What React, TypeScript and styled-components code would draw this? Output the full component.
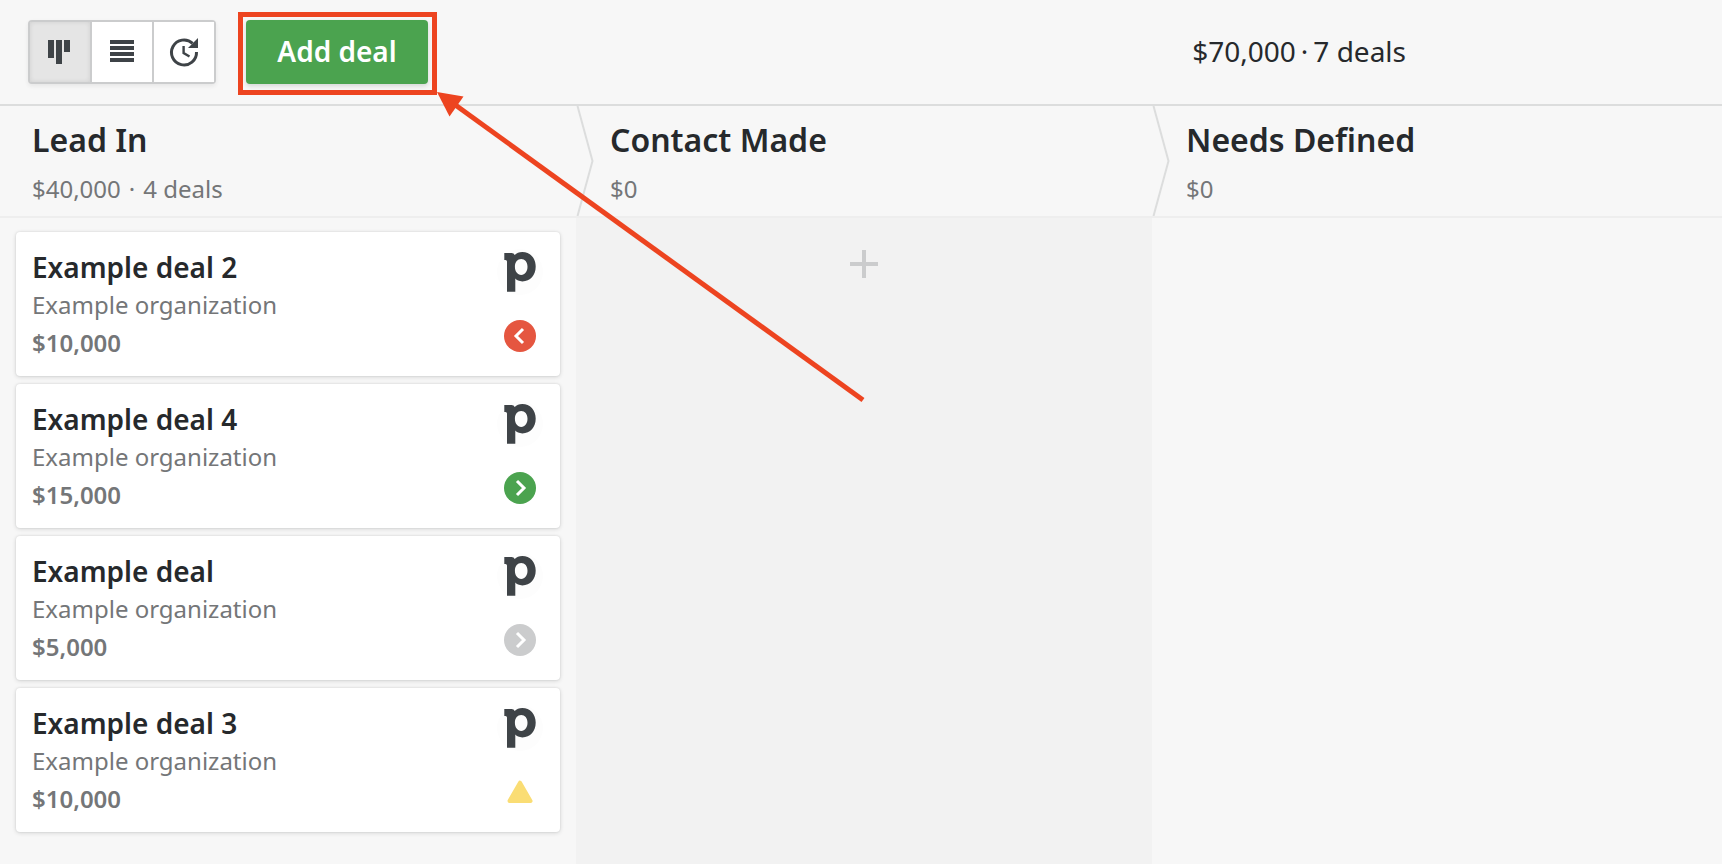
import React from "react";
import styled, { createGlobalStyle, css } from "styled-components";

const GlobalStyle = createGlobalStyle`
  * {
    box-sizing: border-box;
  }
  body {
    margin: 0;
    background: #f7f7f7;
    color: #26292c;
    font-family: "Noto Sans", "Open Sans", sans-serif;
    overflow-x: hidden;
  }
  h2, h3, p, ul {
    margin: 0;
    padding: 0;
  }
`;

const Page = styled.div`
  display: flex;
  flex-direction: column;
  min-height: 100vh;
  overflow: hidden;
`;

const Toolbar = styled.header`
  display: flex;
  align-items: center;
  padding: 20px 316px 20px 28px;
  border-bottom: 2px solid #dcdddd;
`;

const ViewSwitch = styled.div`
  display: flex;
  height: 64px;
  border: 2px solid #cbcccd;
  border-radius: 4px;
  background: #fff;
  box-shadow: 0 2px 4px rgba(38, 41, 44, 0.08);
`;

const ViewButton = styled.button<{ $active?: boolean }>`
  display: flex;
  align-items: center;
  justify-content: center;
  box-sizing: content-box;
  width: 60px;
  padding: 0;
  border: 0;
  background: #fff;
  color: #3e4347;
  cursor: pointer;

  & + & {
    border-left: 2px solid #cbcccd;
  }

  ${(p) =>
    p.$active &&
    css`
      background: #e5e5e5;
      box-shadow: inset 0 0 4px rgba(38, 41, 44, 0.12);
    `}
`;

const Highlight = styled.div`
  position: relative;
  margin-left: 30px;

  &::before {
    content: "";
    position: absolute;
    inset: -8px -9px -11px -8px;
    border: 5px solid #ed4420;
    pointer-events: none;
  }
`;

const AddButton = styled.button`
  display: block;
  width: 182px;
  height: 64px;
  padding: 0 0 2px;
  border: 0;
  border-radius: 4px;
  background: #4ba34f;
  box-shadow: 0 2px 4px rgba(38, 41, 44, 0.16);
  color: #fff;
  font: 600 28px/40px "Noto Sans", "Open Sans", sans-serif;
  cursor: pointer;
`;

const Arrow = styled.svg`
  position: absolute;
  top: 100%;
  left: 100%;
  z-index: 2;
  overflow: visible;
  pointer-events: none;
`;

const Summary = styled.p`
  display: flex;
  gap: 5px;
  margin-left: auto;
  padding-bottom: 2px;
  font-size: 28px;
  line-height: 40px;
`;

const Board = styled.main`
  display: grid;
  grid-template-columns: repeat(3, 1fr);
  flex: 1;
  margin-right: -6px;
`;

const Stage = styled.section`
  display: flex;
  flex-direction: column;
`;

const StageHeader = styled.div`
  position: relative;
  height: 112px;
  padding: 12px 32px 0;
  border-bottom: 2px solid #eeeeee;

  ${Stage} + ${Stage} & {
    padding-left: 34px;
  }
`;

const StageName = styled.h2`
  font-size: 32px;
  font-weight: 600;
  line-height: 44px;
`;

const StageTotal = styled.p`
  display: flex;
  gap: 8px;
  padding-top: 8px;
  color: #747678;
  font-size: 24px;
  line-height: 38px;
`;

const Chevron = styled.svg`
  position: absolute;
  top: 0;
  left: 0;
`;

const StageBody = styled.div<{ $hovered?: boolean }>`
  display: flex;
  flex-direction: column;
  flex: 1;
  padding: 14px 16px;
  background: ${(p) => (p.$hovered ? "#f2f2f2" : "transparent")};
`;

const Deals = styled.ul`
  display: flex;
  flex-direction: column;
  gap: 8px;
  list-style: none;
`;

const Card = styled.li`
  display: flex;
  justify-content: space-between;
  height: 144px;
  padding: 16px;
  border-radius: 4px;
  background: #fff;
  box-shadow: 0 0 2px rgba(38, 41, 44, 0.12), 0 1px 4px rgba(38, 41, 44, 0.16);
`;

const DealTitle = styled.h3`
  font-size: 28px;
  font-weight: 600;
  line-height: 38px;
`;

const DealText = styled.p<{ $strong?: boolean }>`
  color: #747678;
  font-size: 24px;
  font-weight: ${(p) => (p.$strong ? 600 : 400)};
  line-height: 38px;
`;

const CardSide = styled.div`
  display: flex;
  flex-direction: column;
  align-items: center;
  gap: 24px;
`;

const AddHere = styled.button`
  display: flex;
  align-self: center;
  padding: 18px;
  border: 0;
  background: none;
  cursor: pointer;
`;

type Status = "overdue" | "today" | "planned" | "none";

const statusColor: Record<Status, string> = {
  overdue: "#e55640",
  today: "#4ba34f",
  planned: "#cbcccd",
  none: "#fadd74",
};

const StatusIcon = ({ status }: { status: Status }) => (
  <svg width="32" height="32" viewBox="0 0 32 32" role="img" aria-label={status}>
    {status === "none" ? (
      <path
        d="M16 6.7 L26.5 25 H5.5 Z"
        fill={statusColor.none}
        stroke={statusColor.none}
        strokeWidth="4"
        strokeLinejoin="round"
      />
    ) : (
      <>
        <circle cx="16" cy="16" r="16" fill={statusColor[status]} />
        <path
          d={status === "overdue" ? "M19 9 L12 16 L19 23" : "M13 9 L20 16 L13 23"}
          fill="none"
          stroke="#fff"
          strokeWidth="3"
        />
      </>
    )}
  </svg>
);

const OrgLogo = () => (
  <svg width="48" height="48" viewBox="0 0 48 48" aria-hidden="true">
    <circle cx="24" cy="24" r="23" fill="#fdfdfd" />
    <path
      fillRule="evenodd"
      fill="#3e4347"
      d="M8.3 4.9 H15.5 Q18 4.9 18.7 7 C20.6 5 23 4 26.3 4 C34 4 39.7 10 39.7 18.6 C39.7 27.3 34.3 33.4 26.4 33.4 C23 33.4 20.8 32.3 19.3 30.6 V43.7 H11 V13.5 Q11 11.9 9.5 11.9 H8.3 Z M25.2 10.9 C21.6 10.9 18.9 13.8 18.9 18.8 C18.9 23.6 21.6 26.9 25.2 26.9 C29 26.9 31.5 23.4 31.5 18.8 C31.5 13.8 28.8 10.9 25.2 10.9 Z"
    />
  </svg>
);

const PipelineIcon = () => (
  <svg width="32" height="32" viewBox="0 0 32 32" fill="currentColor" aria-hidden="true">
    <path d="M4 4h6v18H4zM12 4h6v24h-6zM20 4h6v12h-6z" />
  </svg>
);

const ListIcon = () => (
  <svg width="32" height="32" viewBox="0 0 32 32" fill="currentColor" aria-hidden="true">
    <path d="M4 4h24v4H4zM4 10h24v4H4zM4 16h24v4H4zM4 22h24v4H4z" />
  </svg>
);

const ForecastIcon = () => (
  <svg width="32" height="32" viewBox="0 0 32 32" aria-hidden="true">
    <path d="M24.6 7.4 A12.5 12.5 0 1 0 28.5 16" fill="none" stroke="currentColor" strokeWidth="3" />
    <path d="M30 2 V12 H20 Z" fill="currentColor" />
    <path d="M15.6 10 V17 L21.5 20.5" fill="none" stroke="currentColor" strokeWidth="2.4" />
  </svg>
);

const StageChevron = () => (
  <Chevron width="18" height="110" viewBox="0 0 18 110" aria-hidden="true">
    <path d="M1.5 0 L16.5 55 L1.5 110" fill="none" stroke="#dcdddd" strokeWidth="2" />
  </Chevron>
);

interface Deal {
  title: string;
  value: string;
  status: Status;
}

const stages: { name: string; value: string; count?: string; deals: Deal[]; hovered?: boolean }[] = [
  {
    name: "Lead In",
    value: "$40,000",
    count: "4 deals",
    deals: [
      { title: "Example deal 2", value: "$10,000", status: "overdue" },
      { title: "Example deal 4", value: "$15,000", status: "today" },
      { title: "Example deal", value: "$5,000", status: "planned" },
      { title: "Example deal 3", value: "$10,000", status: "none" },
    ],
  },
  { name: "Contact Made", value: "$0", deals: [], hovered: true },
  { name: "Needs Defined", value: "$0", deals: [] },
];

export default function App() {
  return (
    <>
      <GlobalStyle />
      <Page>
        <Toolbar>
          <ViewSwitch>
            <ViewButton $active aria-label="Pipeline view">
              <PipelineIcon />
            </ViewButton>
            <ViewButton aria-label="List view">
              <ListIcon />
            </ViewButton>
            <ViewButton aria-label="Forecast view">
              <ForecastIcon />
            </ViewButton>
          </ViewSwitch>
          <Highlight>
            <AddButton>Add deal</AddButton>
            <Arrow width="436" height="318" viewBox="0 0 436 318" aria-hidden="true">
              <path d="M26 20 L435 316" stroke="#ed4420" strokeWidth="5" />
              <path d="M9 8 L35.5 12.5 L21.5 32.5 Z" fill="#ed4420" />
            </Arrow>
          </Highlight>
          <Summary>
            <span>$70,000</span>
            <span>·</span>
            <span>7 deals</span>
          </Summary>
        </Toolbar>
        <Board>
          {stages.map((stage, i) => (
            <Stage key={stage.name}>
              <StageHeader>
                {i > 0 && <StageChevron />}
                <StageName>{stage.name}</StageName>
                <StageTotal>
                  <span>{stage.value}</span>
                  {stage.count && (
                    <>
                      <span>·</span>
                      <span>{stage.count}</span>
                    </>
                  )}
                </StageTotal>
              </StageHeader>
              <StageBody $hovered={stage.hovered}>
                {stage.deals.length > 0 && (
                  <Deals>
                    {stage.deals.map((deal) => (
                      <Card key={deal.title}>
                        <div>
                          <DealTitle>{deal.title}</DealTitle>
                          <DealText>Example organization</DealText>
                          <DealText $strong>{deal.value}</DealText>
                        </div>
                        <CardSide>
                          <OrgLogo />
                          <StatusIcon status={deal.status} />
                        </CardSide>
                      </Card>
                    ))}
                  </Deals>
                )}
                {stage.hovered && (
                  <AddHere aria-label="Add deal to this stage">
                    <svg width="28" height="28" viewBox="0 0 28 28" aria-hidden="true">
                      <path d="M12 0h4v12h12v4H16v12h-4V16H0v-4h12z" fill="#cbcccd" />
                    </svg>
                  </AddHere>
                )}
              </StageBody>
            </Stage>
          ))}
        </Board>
      </Page>
    </>
  );
}
